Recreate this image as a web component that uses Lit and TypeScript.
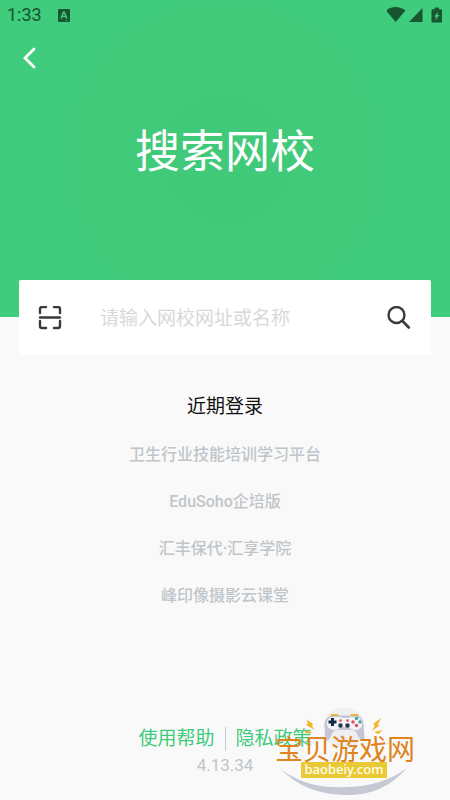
import { LitElement, html, css } from "lit";
import { customElement } from "lit/decorators.js";

@customElement("status-bar")
class StatusBar extends LitElement {
  static styles = css`
    :host { display: flex; align-items: center; height: 30px; padding: 0 7px; color: #17562f; font: 400 18px/30px Roboto, sans-serif; }
    .note { width: 12px; height: 13px; margin-left: 16px; }
    .system { width: 56px; height: 18px; margin-left: auto; }
    svg { display: block; }
  `;
  render() {
    return html`
      <span>1:33</span>
      <svg class="note" viewBox="0 0 12 13" aria-hidden="true">
        <rect width="12" height="13" rx="1" fill="#17562f" />
        <path d="M3 9.5 5.4 3.2h1L8.8 9.5M4 7.4h3.8" fill="none" stroke="#3ecb7c" stroke-width="1.5" />
        <path d="M7 11.3h3" stroke="#2d8f56" stroke-width="1" />
      </svg>
      <svg class="system" viewBox="0 0 56 18" aria-hidden="true">
        <g fill="#17562f">
          <path d="M-1 4.6C4-.1 13-.1 18.5 4.6L8.7 16z" />
          <path d="M35.5 2v14H22z" />
          <path d="M45.5 3.2h2.2V1.5h4.200v1.700h2.100q1 0 1 1V15.500q0 1-1 1h-8.500q-1 0-1-1V4.200q0-1 1-1z" />
        </g>
        <path d="M51.500 5.200 47 10.700h2.300L48 14.800l4.500-5.900h-2.400z" fill="#3ecb7c" />
      </svg>
    `;
  }
}

@customElement("site-watermark")
class SiteWatermark extends LitElement {
  static styles = css`
    :host { display: block; width: 180px; height: 110px; }
    svg { display: block; width: 100%; height: 100%; }
    .name { font: 400 28px "Noto Sans CJK SC", sans-serif; fill: #df8420; }
    .domain { font: 500 13px "Noto Sans", sans-serif; fill: #fffef0; }
  `;
  render() {
    return html`
      <svg viewBox="0 0 180 110" role="img" aria-label="宝贝游戏网 baobeiy.com">
        <circle cx="84" cy="38" r="21" fill="#efefef" />
        <path d="M20.500 79C43 96 66 98 88 97c23-1 41-6 59-19-17 19-36 27-59 27-28 0-49-8-67.500-26z" fill="#c6c8d4" />
        <g fill="#f3b526">
          <path d="M46 29l7 5-1 2 3 4-9-5 2-2z" />
          <path d="M121 28l-3 6-1 1 3 0-8 6 3-6-2-1z" />
          <path d="M43 40l9 2-3 2zM123 40l-9 2 4 2z" />
          <path d="M70 27l1-3h7l1 3zM90 27l1-3h7l1 3z" />
        </g>
        <path d="M65 34c0-6 4-8 10-8h19c6 0 9 3 9 8l2 17c-8 0-6-9-12-11H76c-6 2-4 11-11 11z" fill="#c5c6d3" />
        <path d="M67 32c1-4 4-5 8-5h5l3 1h5l3-1h4c4 0 7 2 7 7 0 4-3 6-7 6-3 0-5-1-6-3h-9c-1 2-3 3-6 3-5 0-8-4-7-8z" fill="#f3f2f8" />
        <path d="M65 37c0-8 3-11 10-11h19c7 0 9 3 9 11" fill="none" stroke="#c4c4d1" stroke-width="1" />
        <path d="M72.500 28v8M68.500 32h8" stroke="#142b48" stroke-width="3" />
        <g fill="#23394f"><circle cx="80.500" cy="35.500" r="2.200" /><circle cx="87.500" cy="35.500" r="2.200" /></g>
        <g fill="#e34c5c"><circle cx="80.500" cy="30.500" r="1.300" /><circle cx="87.500" cy="30.500" r="1.300" /><circle cx="93" cy="32" r="1.700" /><circle cx="96.500" cy="35.500" r="1.700" /></g>
        <g fill="#3fa6a4"><circle cx="96.500" cy="28.500" r="1.700" /><circle cx="100" cy="32" r="1.700" /></g>
        <text class="name" x="15" y="70">宝贝游戏网</text>
        <rect x="41" y="72" width="86" height="16" fill="#e9ca34" />
        <text class="domain" x="84" y="84" text-anchor="middle">baobeiy.com</text>
      </svg>
    `;
  }
}

@customElement("app-root")
class AppRoot extends LitElement {
  static styles = css`
    :host {
      display: flex; flex-direction: column; position: relative; min-height: 100vh;
      background: #f9f9f9; color: #111;
      font-family: Roboto, "Noto Sans CJK SC", sans-serif;
    }
    * { box-sizing: border-box; }
    button { border: 0; padding: 0; background: none; font: inherit; color: inherit; cursor: pointer; }
    svg { display: block; }
    header {
      height: 317px; flex: none; color: #fff;
      background: radial-gradient(circle at 50% 50%, #40c978 0, #40ca7a 150px, #3fcd7d 180px);
    }
    .back { display: block; width: 36px; height: 36px; margin: 10px 0 0 12px; }
    h1 { margin: 47px 0 0; text-align: center; font-size: 45px; line-height: 60px; font-weight: 400; }
    .search {
      display: flex; align-items: center; flex: none; height: 75px; margin: -37px 19px 0;
      padding: 0 20px 0 19px; border-radius: 2px; background: #fff; position: relative;
    }
    .icon { flex: none; width: 24px; height: 24px; }
    .field {
      flex: 1; min-width: 0; height: 30px; margin: 0 20px 0 38px; padding: 2px 0 0; border: 0; outline: 0; background: none;
      font: 400 19px/28px Roboto, "Noto Sans CJK SC", sans-serif; color: #333;
    }
    .field::placeholder { color: #d8d8d8; opacity: 1; }
    h2 { margin: 38px 0 0; text-align: center; font-size: 19px; line-height: 28px; font-weight: 400; }
    ul { list-style: none; margin: 22px 0 0; padding: 0; display: flex; flex-direction: column; align-items: center; gap: 23px; }
    .school { display: block; font-size: 16px; line-height: 24px; font-weight: 500; color: #c0c5c9; }
    footer { margin-top: auto; padding-bottom: 23px; text-align: center; }
    .links { display: flex; justify-content: center; align-items: center; font-size: 19px; line-height: 28px; }
    .links a { color: #3fcb7c; text-decoration: none; padding-top: 1px; }
    .rule { width: 1px; height: 24px; margin: 0 10px; background: #c8cccf; }
    .version { margin: 0; font-size: 17px; line-height: 24px; color: #c0c5c9; }
    .mark { position: absolute; right: 10px; bottom: 0; pointer-events: none; }
  `;

  private schools = ["卫生行业技能培训学习平台", "EduSoho企培版", "汇丰保代·汇享学院", "峰印像摄影云课堂"];

  render() {
    return html`
      <header>
        <status-bar></status-bar>
        <button class="back" aria-label="返回">
          <svg viewBox="0 0 36 36" width="36" height="36"><path d="M22 9l-9 9 9 9" fill="none" stroke="#fff" stroke-width="2.800" stroke-linecap="round" /></svg>
        </button>
        <h1>搜索网校</h1>
      </header>
      <form class="search" role="search">
        <button class="icon" type="button" aria-label="扫码">
          <svg viewBox="0 0 24 24" width="24" height="24"><path d="M2 7V3q0-2 2-2h4M16 1h4q2 0 2 2v4M2 15v5q0 2 2 2h4M16 22h4q2 0 2-2v-5M2 11.500h20" fill="none" stroke="#3b3b3b" stroke-width="2.400" stroke-linecap="round" /></svg>
        </button>
        <input class="field" type="text" aria-label="网校网址或名称" placeholder="请输入网校网址或名称" />
        <button class="icon" type="button" aria-label="搜索">
          <svg viewBox="0 0 24 24" width="24" height="24"><circle cx="9.500" cy="9" r="8" fill="none" stroke="#3b3b3b" stroke-width="2.400" /><path d="M15.500 15l6.300 6.500" stroke="#3b3b3b" stroke-width="2.600" stroke-linecap="round" /></svg>
        </button>
      </form>
      <h2>近期登录</h2>
      <ul>${this.schools.map((s) => html`<li><button class="school">${s}</button></li>`)}</ul>
      <footer>
        <div class="links"><a href="#help">使用帮助</a><span class="rule"></span><a href="#privacy">隐私政策</a></div>
        <p class="version">4.13.34</p>
      </footer>
      <site-watermark class="mark"></site-watermark>
    `;
  }
}
